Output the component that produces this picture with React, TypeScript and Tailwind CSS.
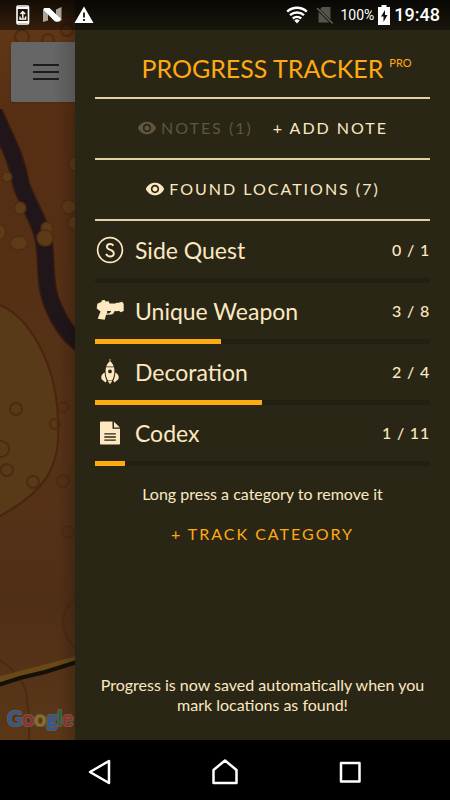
import type { ReactNode } from "react";
import { MdVisibility } from "react-icons/md";

const SideQuestIcon = () => (
  <svg viewBox="0 0 30 30" className="h-[30px] w-[30px]" aria-hidden="true">
    <circle cx="15" cy="15" r="12.4" fill="none" stroke="currentColor" strokeWidth="1.7" />
    <path
      d="M18.4 10.6C17.6 9.5 16.5 9 15.1 9c-1.9 0-3.2 1.1-3.2 2.7 0 3.8 6.9 2.7 6.9 6.6 0 1.9-1.5 3.2-3.6 3.2-1.9 0-3.3-.9-4.1-2.6"
      fill="none"
      stroke="currentColor"
      strokeWidth="1.9"
    />
  </svg>
);

const WeaponIcon = () => (
  <svg viewBox="0 0 30 30" className="h-[30px] w-[30px]" fill="currentColor" aria-hidden="true">
    <path
      fillRule="evenodd"
      d="M7 4.3L9.7 4l1 1.500 3-.2.8 2.300h5.800l1.400-1 .5.400 5.100-1.300 1.400 2.200V15l-3 1.300-1.400-1.200-5 .1c-.2 2-1.300 3.200-3.300 3.400l-4.900.1-1.400 5-7-.9 2.800-7.300-3.800-3L2.300 7.700l4-1.700zM11.800 14.900l.6 1-.8 1.500c2.400.4 4.100-.3 4.500-2.300z"
    />
  </svg>
);

const RocketIcon = () => (
  <svg viewBox="0 0 30 30" className="h-[30px] w-[30px]" fill="currentColor" aria-hidden="true">
    <path d="M14.6 2h.8v2.400c1.500 1.300 2.700 3 3.300 5.100h-7.400c.6-2.100 1.800-3.800 3.300-5.100z" />
    <path
      fillRule="evenodd"
      d="M11 10.300h8c.9 4.400.4 9-1.600 12.700h-4.800C10.600 19.300 10.100 14.700 11 10.300zM15 12.500a1.900 1.900 0 1 0 0 3.800 1.900 1.900 0 0 0 0-3.800z"
    />
    <path d="M9.700 15.600c.1 3 .7 5.700 2 8.200l-1.200 1.600-3.900-3.200c-1-2.600.1-5 3.100-6.600zM20.300 15.600c-.1 3-.7 5.700-2 8.200l1.200 1.600 3.900-3.200c1-2.600-.1-5-3.100-6.600zM12.800 23.600h4.400l-.8 1.800h-.7l-.3 1.600h-.8l-.3-1.600h-.7z" />
  </svg>
);

const CodexIcon = () => (
  <svg viewBox="0 0 30 30" className="h-[30px] w-[30px]" aria-hidden="true">
    <path
      d="M6.200 3.500h11.300v7.300h7.500v14.600c0 .8-.5 1.200-1.200 1.200H6.200c-.8 0-1.200-.5-1.200-1.200V4.700c0-.8.5-1.200 1.200-1.200zM19 3.700l5.900 5.700H19z"
      fill="currentColor"
    />
    <path d="M9.300 15.800h11.500M9.300 19h11.500M9.300 22.200h11.500" stroke="#2a2615" strokeWidth="1.3" />
  </svg>
);

type Category = {
  name: string;
  found: number;
  total: number;
  icon: ReactNode;
};

const categories: Category[] = [
  { name: "Side Quest", found: 0, total: 1, icon: <SideQuestIcon /> },
  { name: "Unique Weapon", found: 3, total: 8, icon: <WeaponIcon /> },
  { name: "Decoration", found: 2, total: 4, icon: <RocketIcon /> },
  { name: "Codex", found: 1, total: 11, icon: <CodexIcon /> },
];

function StatusBar() {
  return (
    <header className="absolute inset-x-0 top-0 z-20 flex h-[30px] items-center justify-between bg-linear-to-b from-black/80 to-black/45 pr-2.5 pl-4 font-[Roboto,sans-serif] text-white">
      <div className="flex items-center gap-3">
        <svg viewBox="0 0 14 20" className="h-5 w-3.5" fill="none" stroke="white" aria-hidden="true">
          <rect x="1" y="1" width="11.5" height="18" rx="1" strokeWidth="1.6" />
          <path d="M1 3h11.500M1 17h11.500" strokeWidth="2" />
          <path d="M6.800 13V7M4.500 9l2.300-2.300L9.100 9M4 11.500V14h5.600v-2.500" strokeWidth="1.4" />
        </svg>
        <svg viewBox="0 0 20 16" className="h-4 w-5" aria-hidden="true">
          <path d="M1 2.500L6 1v12.500L1 15zM14 2.500L19.500 0v13.500L14 15z" fill="#aaa39b" />
          <path d="M2 1h5.500L19 12l-1.500 2.500H13L1.500 3z" fill="white" />
        </svg>
        <svg viewBox="0 0 20 18" className="h-[18px] w-5" aria-hidden="true">
          <path d="M10 .5L19.500 17H.5z" fill="white" />
          <path d="M10 6.500v5M10 13v2" stroke="#1b140a" strokeWidth="1.8" />
        </svg>
      </div>
      <div className="flex items-center">
        <svg viewBox="0 0 22 18" className="h-[18px] w-[22px]" fill="none" stroke="white" strokeWidth="2.4" aria-hidden="true">
          <path d="M1.200 5.600a14.500 14.500 0 0 1 19.600 0M4 9.200a10.500 10.500 0 0 1 14 0M6.800 12.500a6.500 6.500 0 0 1 8.400 0" />
          <path d="M11 17.600l-2.700-3.200a4 4 0 0 1 5.400 0z" fill="white" stroke="none" />
        </svg>
        <svg viewBox="0 0 18 18" className="ml-2 h-[18px] w-[18px]" aria-hidden="true">
          <path d="M6 1h8.500v15.500h-12V5z" fill="#55534c" />
          <path d="M.8 2l15.700 15.500" stroke="#12100a" strokeWidth="3" />
          <path d="M1 2l15.700 15.500" stroke="#65635c" strokeWidth="1.4" />
        </svg>
        <span className="ml-1.5 text-sm leading-6">100%</span>
        <svg viewBox="0 0 12 20" className="ml-1 h-5 w-3" aria-hidden="true">
          <path d="M3.500 0h5v2H12v18H0V2h3.500z" fill="white" />
          <path d="M7 5L3 11.500h2.500V17L9.500 10H7z" fill="#12100a" />
        </svg>
        <span className="ml-1 text-lg leading-6 font-medium">19:48</span>
      </div>
    </header>
  );
}

function MapStrip() {
  return (
    <section aria-label="Map" className="relative w-1/6 shrink-0 overflow-hidden bg-[#543015]">
      <svg
        viewBox="0 0 75 740"
        preserveAspectRatio="xMinYMin slice"
        className="absolute inset-0 h-full w-full"
        aria-hidden="true"
      >
        <defs>
          <linearGradient id="ground" x1="0" y1="0" x2="0" y2="1">
            <stop offset="0" stopColor="#633a17" />
            <stop offset="0.16" stopColor="#562e14" />
            <stop offset="0.4" stopColor="#543015" />
            <stop offset="0.6" stopColor="#563217" />
            <stop offset="0.82" stopColor="#502f17" />
            <stop offset="1" stopColor="#5a3718" />
          </linearGradient>
          <linearGradient id="edge" x1="0" y1="0" x2="1" y2="0">
            <stop offset="0.78" stopColor="#000" stopOpacity="0" />
            <stop offset="1" stopColor="#000" stopOpacity="0.18" />
          </linearGradient>
        </defs>
        <rect width="75" height="740" fill="url(#ground)" />
        <path
          d="M-2 304C28 316 58 362 58 426C61 472 38 496 -2 517z"
          fill="#583a18"
          stroke="#4b230f"
          strokeWidth="2"
        />
        <path
          d="M-6 112C6 140 17 158 21 184C28 206 40 219 44 242C47 264 44 288 54 308C60 324 68 334 80 344"
          fill="none"
          stroke="#391b12"
          strokeWidth="18"
        />
        <path
          d="M-6 112C6 140 17 158 21 184C28 206 40 219 44 242C47 264 44 288 54 308C60 324 68 334 80 344"
          fill="none"
          stroke="#20161a"
          strokeWidth="15"
        />
        <g fill="#5c3b19" stroke="#4f2c11" strokeWidth="1.5">
          <circle cx="47" cy="228" r="6" />
          <circle cx="45" cy="238" r="8" />
          <circle cx="7" cy="177" r="5" />
          <circle cx="20" cy="208" r="6" />
          <circle cx="-2" cy="232" r="8" />
          <ellipse cx="19" cy="243" rx="9" ry="7" />
          <circle cx="69" cy="207" r="7" />
          <circle cx="75" cy="223" r="7" />
          <circle cx="76" cy="164" r="7" />
        </g>
        <g fill="none" stroke="#4e2a10" strokeWidth="2">
          <circle cx="16" cy="409" r="6" />
          <circle cx="63" cy="407" r="5" />
          <circle cx="55" cy="424" r="5" />
          <circle cx="1" cy="449" r="8" />
          <circle cx="7" cy="470" r="6" />
          <circle cx="33" cy="482" r="6" />
          <circle cx="63" cy="481" r="6" />
          <circle cx="68" cy="532" r="6" />
          <circle cx="22" cy="37" r="7" />
          <circle cx="48" cy="40" r="6" />
          <circle cx="67" cy="30" r="6" />
          <path d="M77 597C59 611 58 630 77 651M-2 660C8 664 27 680 27 700C30 715 29 725 29 740" />
        </g>
        <path d="M-2 680L77 659" stroke="#6a4915" strokeWidth="6" />
        <path d="M-2 685L20 678L45 672L77 662" fill="none" stroke="#150f08" strokeWidth="4" />
        <rect width="75" height="740" fill="url(#edge)" />
      </svg>
      <button
        type="button"
        aria-label="Menu"
        className="relative mt-[42px] ml-[11px] flex h-[60px] w-[70px] items-center justify-center rounded-xs bg-[#666] bg-linear-to-r from-transparent from-60% to-black/20 shadow"
      >
        <svg viewBox="0 0 26 18" className="h-[18px] w-[26px]" stroke="#1c1c1c" strokeWidth="2" aria-hidden="true">
          <path d="M0 2h26M0 9h26M0 16h26" />
        </svg>
      </button>
      <div className="absolute bottom-1.5 left-[7px] flex font-[Lato,sans-serif] text-[21px] leading-8 font-medium [filter:drop-shadow(1px_0_0_#65584c)_drop-shadow(-1px_0_0_#65584c)_drop-shadow(0_1px_0_#65584c)_drop-shadow(0_-1px_0_#65584c)]">
        <span className="text-[#2459a8]">G</span>
        <span className="text-[#9c2820]">o</span>
        <span className="text-[#9a740b]">o</span>
        <span className="text-[#2459a8]">g</span>
        <span className="text-[#126e38]">l</span>
        <span className="text-[#9c2820]">e</span>
      </div>
    </section>
  );
}

function CategoryRow({ name, found, total, icon }: Category) {
  return (
    <li>
      <div className="flex h-14 items-center">
        {icon}
        <span className="ml-2.5 text-[23px]">{name}</span>
        <span className="ml-auto text-base font-medium tracking-wider">
          {found} / {total}
        </span>
      </div>
      <div className="h-[5px] bg-[#222010]">
        <div className="h-full bg-[#ffaa13]" style={{ width: `${(found / total) * 100}%` }} />
      </div>
    </li>
  );
}

function Drawer() {
  return (
    <main className="flex min-w-0 flex-1 flex-col bg-[#2a2615] px-5 pt-[38px] font-[Lato,sans-serif] text-[#fce8c1]">
      <div className="flex h-[61px] items-center justify-center border-b-2 border-[#e5cfa6] pt-0.5 pl-7 text-[#ffaa13]">
        <h1 className="text-[25px]">PROGRESS TRACKER</h1>
        <sup className="ml-1.5 text-[11px]">PRO</sup>
      </div>

      <div className="flex h-[61px] items-center justify-center gap-5 border-b-2 border-[#e5cfa6] pb-0.5 text-base">
        <button type="button" className="flex items-center gap-1 tracking-[2px] text-[#5f563d]">
          <MdVisibility className="h-5 w-5" />
          NOTES (1)
        </button>
        <button type="button" className="tracking-[2px]">+ ADD NOTE</button>
      </div>

      <div className="flex h-[61px] items-center justify-center border-b-2 border-[#e5cfa6] pb-0.5 text-base">
        <button type="button" className="flex items-center gap-1 tracking-[2px]">
          <MdVisibility className="h-5 w-5" />
          FOUND LOCATIONS (7)
        </button>
      </div>

      <ul className="mt-px">
        {categories.map((category) => (
          <CategoryRow key={category.name} {...category} />
        ))}
      </ul>

      <p className="mt-[18px] text-center text-base leading-5">Long press a category to remove it</p>
      <button type="button" className="mt-5 text-center text-base leading-5 tracking-[2px] text-[#ffaa13]">
        + TRACK CATEGORY
      </button>

      <p className="mt-auto pb-[25px] text-center text-base leading-5">
        Progress is now saved automatically when you mark locations as found!
      </p>
    </main>
  );
}

function NavBar() {
  return (
    <nav className="flex h-[60px] items-center justify-center gap-[99px] bg-black pt-1">
      <button type="button" aria-label="Back">
        <svg viewBox="0 0 26 26" className="h-[26px] w-[26px]" fill="none" stroke="white" strokeWidth="2.5" strokeLinejoin="round" aria-hidden="true">
          <path d="M22 2v22L3 13z" />
        </svg>
      </button>
      <button type="button" aria-label="Home">
        <svg viewBox="0 0 26 26" className="h-[26px] w-[26px]" fill="none" stroke="white" strokeWidth="2.5" strokeLinejoin="round" aria-hidden="true">
          <path d="M13 1.500l11.500 9.500v13h-23V11z" />
        </svg>
      </button>
      <button type="button" aria-label="Recent apps">
        <svg viewBox="0 0 26 26" className="h-[26px] w-[26px]" fill="none" stroke="white" strokeWidth="2.5" strokeLinejoin="round" aria-hidden="true">
          <path d="M4 4h18.500v18.500H4z" />
        </svg>
      </button>
    </nav>
  );
}

export default function App() {
  return (
    <div className="relative flex min-h-screen flex-col bg-black">
      <StatusBar />
      <div className="flex flex-1">
        <MapStrip />
        <Drawer />
      </div>
      <NavBar />
    </div>
  );
}
